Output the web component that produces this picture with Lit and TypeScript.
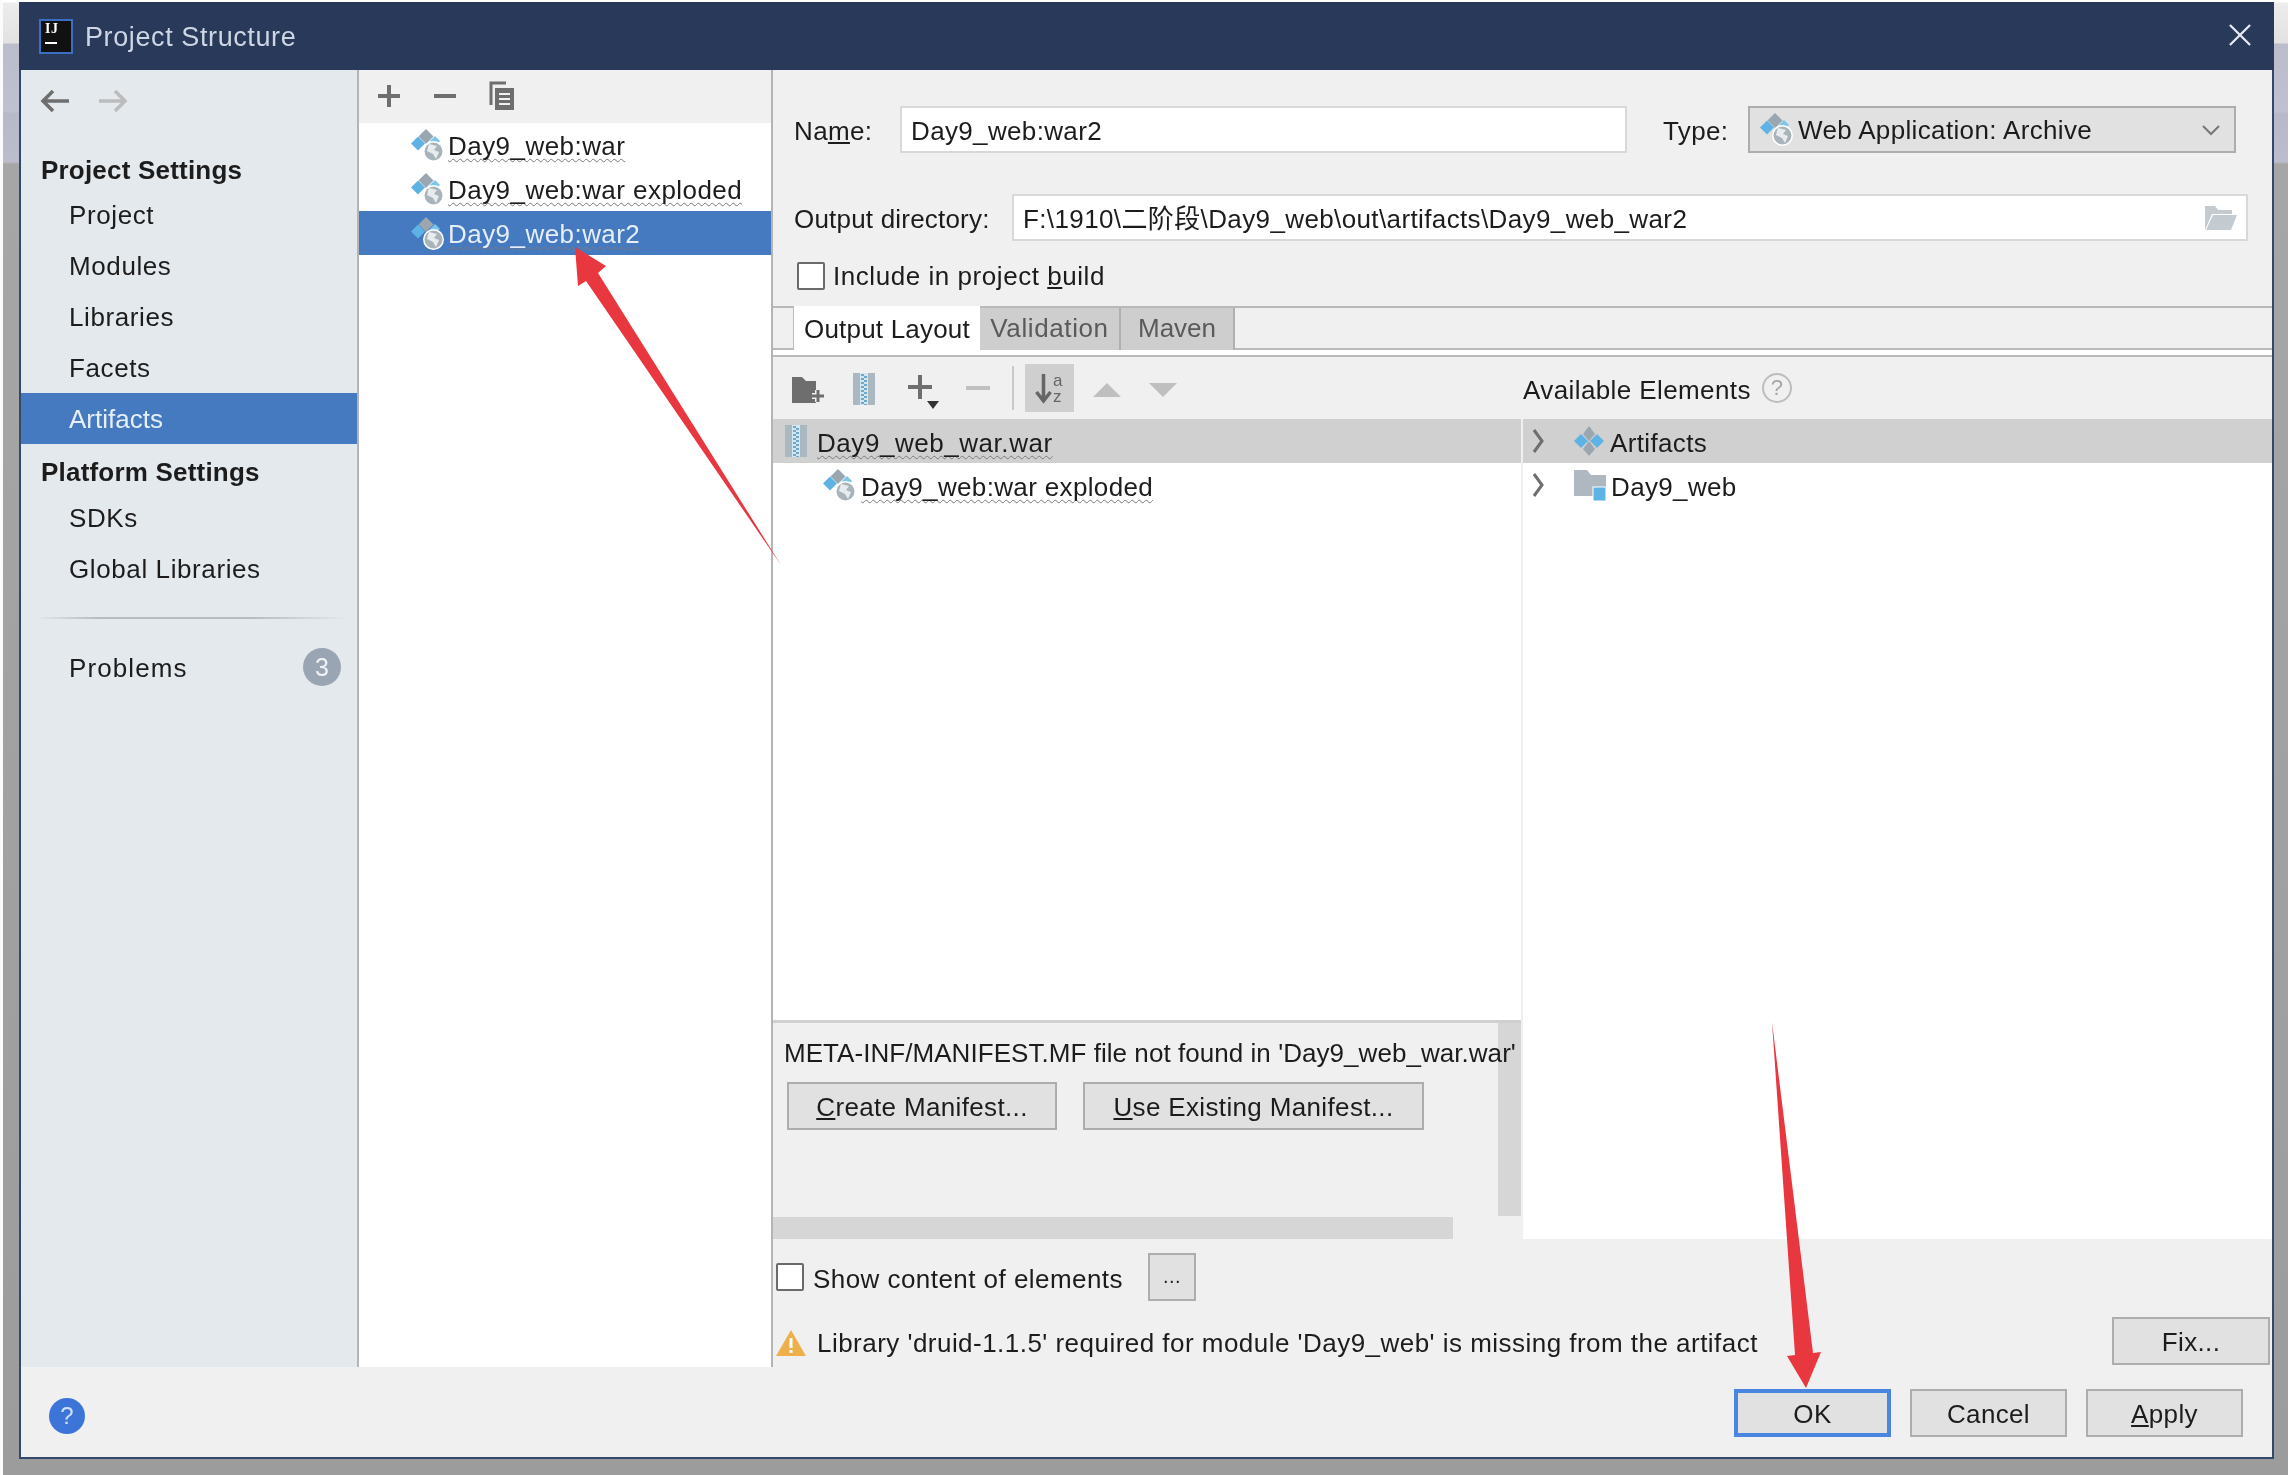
import { LitElement, html, css, svg } from "lit";
import { customElement } from "lit/decorators.js";

const artIcon = () => html`<svg class="ic33" viewBox="0 0 33 33">
  <path d="M15 0l7.5 7.5-7.5 7.5-7.5-7.5z" fill="#9aa7b0"/>
  <path d="M7 7.5l7 7-7 7-7-7z" fill="#5fb3e4"/>
  <path d="M24 7l5 5-3 3h-6l-1-3z" fill="#7cc6ec"/>
  <circle cx="22.5" cy="22.5" r="10.5" fill="#fff"/>
  <circle cx="22.5" cy="22.5" r="9" fill="#a9b3ba"/>
  <path d="M18 15l8 2-3 4 5 2-3 7-3-5-6-3 1-4z" fill="#e8ecef"/>
</svg>`;

const artsIcon = () => html`<svg class="ic30" viewBox="0 0 30 30">
  <path d="M15 0l6 8-6 7-6-7z" fill="#9aa7b0"/>
  <path d="M7 8l7 7-7 7-7-7z" fill="#5fb3e4"/>
  <path d="M23 8l7 7-7 7-7-7z" fill="#5fb3e4"/>
  <path d="M15 15l6 8-6 7-6-7z" fill="#9aa7b0"/>
</svg>`;

const warIcon = () => html`<svg class="war" viewBox="0 0 22 32">
  <rect width="22" height="32" fill="#aab8c2"/>
  <rect x="7" width="8" height="32" fill="#d4e6f1"/>
  ${[1, 5, 9, 13, 17, 21, 25, 29].map(
    (y) => svg`<rect x="8" y=${y} width="3" height="2" fill="#6fa8c9"/><rect x="11" y=${y + 2} width="3" height="2" fill="#6fa8c9"/>`
  )}
</svg>`;

const folderIcon = () => html`<svg class="folder" viewBox="0 0 32 31">
  <path d="M0 0h13l4 5h15v21H0z" fill="#afb8c0"/>
  <rect x="19" y="17" width="13" height="14" fill="#5fb3e4" stroke="#fff" stroke-width="1"/>
</svg>`;

const chev = () => html`<svg class="chev" viewBox="0 0 12 24"><path d="M2 1l8 11-8 11" fill="none" stroke="#6e6e6e" stroke-width="3"/></svg>`;

const wavy = (t: string) => html`<span class="wavy">${t}</span>`;

@customElement("app-root")
export class AppRoot extends LitElement {
  static styles = css`
    :host {
      display: block;
      width: 2288px;
      height: 1475px;
      overflow: hidden;
      position: relative;
      background: linear-gradient(#fff 0, #fff 2px, #ececec 3px, #e2e2e2 43px, #bcbdcc 44px, #c0c1d0 112px, #b8b9c8 113px, #bcbdcc 162px, #a6a6a6 164px, #9c9c9c 100%);
      border-left: 3px solid #fbfbfb;
      font-family: "Liberation Sans", "Noto Sans CJK SC", sans-serif;
      font-size: 26px;
      letter-spacing: 0.35px;
      color: #1c1c1c;
      box-sizing: border-box;
      padding: 2px 14px 16px 16px;
    }
    * { box-sizing: border-box; }
    .win {
      height: 100%;
      display: flex;
      flex-direction: column;
      background: #f0f0f0;
      border-left: 2px solid #34486b;
      border-right: 2px solid #34486b;
      border-bottom: 2px solid #34486b;
      filter: blur(0.6px);
    }
    .title {
      height: 68px;
      flex: none;
      margin: 0 -2px;
      background: #28395a;
      display: flex;
      align-items: center;
      padding: 0 23px 0 20px;
      color: #cdd6e2;
      font-size: 27px;
      letter-spacing: 0.6px;
    }
    .ij {
      width: 34px;
      height: 35px;
      background: #111;
      border: 2px solid #3b6fc4;
      color: #fff;
      font: bold 14px/16px "Liberation Serif", serif;
      padding: 0 0 0 4px;
      margin-right: 12px;
      display: flex;
      flex-direction: column;
    }
    .ij i { display: block; width: 12px; height: 2px; background: #fff; margin-top: 5px; }
    .title .t { flex: 1; padding-top: 2px; }
    .x { width: 22px; height: 22px; margin-bottom: 2px; }
    .main { flex: 1; display: flex; min-height: 0; }
    .side {
      width: 338px;
      flex: none;
      background: #e4e9ee;
      border-right: 2px solid #b4b4b4;
      display: flex;
      flex-direction: column;
      letter-spacing: 0.6px;
    }
    .nav { height: 75px; flex: none; display: flex; align-items: flex-start; gap: 28px; padding: 19px 0 0 19px; }
    .nav svg { width: 30px; height: 24px; }
    .hd { font-weight: bold; height: 44px; line-height: 51px; padding-left: 20px; letter-spacing: 0.2px; }
    .hd.p { height: 48px; padding-top: 6px; line-height: 45px; }
    .it { height: 51px; line-height: 53px; padding-left: 48px; }
    .it.sel { background: #4579c0; color: #e6eef8; height: 51px; letter-spacing: 0; }
    .sep { height: 2px; margin: 23px 10px 24px 14px; background: linear-gradient(90deg, #e4e9ee, #b8bcc0 20%, #b8bcc0 70%, #e4e9ee); }
    .prob { display: flex; align-items: center; justify-content: space-between; height: 48px; padding: 0 16px 0 48px; letter-spacing: 1.1px; }
    .prob .pt { padding-top: 2px; }
    .badge { width: 38px; height: 38px; border-radius: 50%; background: #9aa5b4; color: #f0f2f5; text-align: center; line-height: 38px; font-size: 25px; letter-spacing: 0; }
    .list { width: 414px; flex: none; background: #fff; border-right: 2px solid #b4b4b4; display: flex; flex-direction: column; letter-spacing: 0.45px; }
    .ltb { height: 53px; flex: none; background: #f0f0f0; display: flex; align-items: center; gap: 32px; padding: 0 0 1px 18px; }
    .tbi { width: 24px; height: 24px; }
    .copy { width: 26px; height: 30px; }
    .lr { height: 44px; display: flex; align-items: center; gap: 4px; padding-left: 52px; }
    .lr .wavy { padding-top: 3px; }
    .lr.sel { background: #4579c0; color: #e6eef8; }
    .wavy { text-decoration: underline wavy #7a7a7a 1px; text-underline-offset: 3px; text-decoration-skip-ink: none; }
    .ic33 { width: 33px; height: 33px; flex: none; }
    .ic30 { width: 30px; height: 30px; flex: none; }
    .war { width: 22px; height: 32px; flex: none; }
    .folder { width: 32px; height: 31px; flex: none; }
    .chev { width: 12px; height: 24px; flex: none; }
    .right { flex: 1; display: flex; flex-direction: column; min-width: 0; }
    .r1 { height: 83px; flex: none; display: flex; align-items: flex-end; padding: 0 0 0 21px; }
    .lbl1 { width: 106px; height: 47px; line-height: 47px; padding-top: 2px; }
    .field { height: 47px; background: #fff; border: 2px solid #d8d8d8; line-height: 47px; padding-left: 9px; }
    .f1 { width: 727px; }
    .lbl2 { width: 85px; height: 47px; margin-left: 36px; line-height: 47px; padding-top: 2px; }
    .combo { width: 488px; height: 47px; background: #e1e1e1; border: 2px solid #adadad; display: flex; align-items: center; gap: 5px; padding: 0 13px 0 10px; }
    .combo span { flex: 1; padding-top: 2px; }
    .combo .dn { width: 20px; height: 12px; }
    .r2 { height: 88px; flex: none; display: flex; align-items: flex-end; padding-left: 21px; }
    .lbl3 { width: 218px; height: 47px; line-height: 47px; padding-top: 2px; letter-spacing: 0.2px; }
    .f2 { width: 1236px; display: flex; align-items: center; justify-content: space-between; padding-right: 9px; letter-spacing: 0.38px; }
    .f2 span { padding-top: 3px; }
    .f2 svg { width: 33px; height: 24px; }
    .chk { width: 28px; height: 28px; flex: none; background: #fff; border: 2px solid #6a6a6a; border-radius: 2px; }
    .r3 { height: 65px; flex: none; display: flex; align-items: flex-start; gap: 8px; padding: 21px 0 0 24px; line-height: 28px; letter-spacing: 0.55px; }
    .tabs { height: 44px; flex: none; display: flex; padding-left: 20px; border-top: 2px solid #b9b9b9; border-bottom: 2px solid #b9b9b9; }
    .tab { height: 42px; line-height: 40px; text-align: center; background: #cecece; color: #5a5a5a; border-right: 2px solid #b0b0b0; }
    .tab.on { background: #fff; color: #1c1c1c; border: 0; width: 187px; margin-bottom: -2px; height: 44px; border-left: 1px solid #bbb; margin-top: -2px; line-height: 42px; padding-top: 2px; letter-spacing: 0.2px; }
    .tw1 { width: 141px; letter-spacing: 0.6px; }
    .tw2 { width: 114px; letter-spacing: 0; }
    .strip { height: 7px; flex: none; background: #fff; border-bottom: 2px solid #b9b9b9; }
    .otb { height: 62px; flex: none; display: flex; align-items: center; }
    .otbl { width: 750px; display: flex; align-items: center; padding-left: 19px; height: 100%; }
    .otbl svg { flex: none; }
    .nf { width: 33px; height: 26px; margin: 3px 28px 0 0; }
    .otbl .war { margin-top: 1px; }
    .plusw { width: 36px; height: 36px; margin: 10px 22px 0 33px; }
    .minusw { width: 24px; height: 4px; }
    .vs { width: 2px; height: 44px; background: #c9c9c9; margin: 0 11px 0 22px; }
    .sort { width: 49px; height: 48px; background: #cfcfcf; display: flex; align-items: center; justify-content: center; }
    .sort svg { width: 32px; height: 40px; }
    .sort text { font-family: "Liberation Sans", sans-serif; font-size: 17px; letter-spacing: 0; fill: #666; }
    .tri { width: 28px; height: 14px; margin-top: 3px; }
    .tri.u { margin-left: 19px; }
    .tri.d { margin-left: 28px; }
    .avail { flex: 1; display: flex; align-items: center; gap: 11px; letter-spacing: 0.4px; }
    .avail .at { padding-top: 5px; }
    .qm { width: 30px; height: 30px; border: 2px solid #bdbdbd; border-radius: 50%; color: #a5a5a5; text-align: center; line-height: 26px; font-size: 22px; letter-spacing: 0; }
    .split { flex: 1; display: flex; min-height: 0; }
    .ltree { width: 750px; flex: none; background: #fff; display: flex; flex-direction: column; border-right: 2px solid #f0f0f0; }
    .rtree { flex: 1; background: #fff; }
    .row0 { height: 44px; background: #d0d0d0; display: flex; align-items: center; gap: 10px; padding-left: 12px; letter-spacing: 0.55px; }
    .row1 { height: 44px; display: flex; align-items: center; gap: 5px; padding-left: 50px; }
    .row0 .wavy, .row1 .wavy, .rr0 span, .rr1 span { padding-top: 5px; }
    .rr0 { height: 44px; background: #d0d0d0; display: flex; align-items: center; padding-left: 9px; gap: 0; }
    .rr1 { height: 44px; display: flex; align-items: center; padding-left: 9px; }
    .rr0 .chev, .rr1 .chev { margin-right: 30px; }
    .rr0 .ic30 { margin-right: 6px; }
    .rr1 .folder { margin-right: 5px; }
    .spacer { flex: 1; }
    .mf { height: 219px; flex: none; background: #f0f0f0; border-top: 3px solid #d0d0d0; position: relative; padding: 13px 0 0 11px; overflow: hidden; white-space: nowrap; }
    .mf .msg { line-height: 35px; height: 33px; position: relative; z-index: 1; letter-spacing: 0.05px; }
    .mf .btns { display: flex; gap: 26px; margin: 13px 0 0 3px; }
    .btn { height: 48px; background: #e1e1e1; border: 2px solid #adadad; display: flex; align-items: center; justify-content: center; color: #1c1c1c; padding-top: 2px; }
    .bm1 { width: 270px; }
    .bm2 { width: 341px; }
    .vsb { position: absolute; right: 0; top: 0; width: 23px; height: 193px; background: #d6d6d6; }
    .hsb { position: absolute; left: 0; bottom: 0; width: 680px; height: 22px; background: #d6d6d6; }
    .lower { height: 128px; flex: none; display: flex; flex-direction: column; padding: 14px 0 0 3px; }
    .show { display: flex; align-items: center; gap: 9px; height: 48px; }
    .show .st { padding-top: 4px; letter-spacing: 0.45px; }
    .dots { width: 48px; height: 48px; margin-left: 16px; padding-bottom: 4px; font-size: 20px; }
    .warn { display: flex; align-items: center; margin-top: 16px; height: 48px; }
    .warn svg { width: 30px; height: 26px; margin-right: 11px; margin-top: 4px; }
    .warn .wt { flex: 1; padding-top: 4px; letter-spacing: 0.47px; }
    .fix { width: 158px; margin-right: 2px; }
    .foot { height: 90px; flex: none; display: flex; align-items: flex-start; padding: 22px 29px 0 0; gap: 19px; }
    .help { width: 36px; height: 36px; margin: 9px auto 0 28px; border-radius: 50%; background: #3c74d8; color: #cfe0fa; text-align: center; line-height: 36px; font-size: 24px; }
    .b3 { width: 157px; }
    .ok { border: 4px solid #4a86df; }
    .arrows { position: absolute; left: -3px; top: 0; width: 2288px; height: 1475px; pointer-events: none; filter: blur(0.5px); }
  `;

  render() {
    const plusMinus = html`
      <svg class="tbi" viewBox="0 0 24 24"><path d="M12 1v22M1 12h22" stroke="#6e6e6e" stroke-width="4"/></svg>
      <svg class="tbi" viewBox="0 0 24 24"><path d="M1 12h22" stroke="#6e6e6e" stroke-width="4"/></svg>
      <svg class="copy" viewBox="0 0 26 30">
        <path d="M2 24V2h15" fill="none" stroke="#6e6e6e" stroke-width="3"/>
        <rect x="6" y="7" width="19" height="22" fill="#6e6e6e"/>
        <path d="M10 13h11M10 18h11M10 23h11" stroke="#f0f0f0" stroke-width="2"/>
      </svg>`;
    return html`
      <div class="win">
        <div class="title">
          <div class="ij">IJ<i></i></div>
          <div class="t">Project Structure</div>
          <svg class="x" viewBox="0 0 24 24"><path d="M1 1l22 22M23 1L1 23" stroke="#e8ecf2" stroke-width="2.4"/></svg>
        </div>
        <div class="main">
          <div class="side">
            <div class="nav">
              <svg viewBox="0 0 30 24"><path d="M29 12H4M13 2L3 12l10 10" fill="none" stroke="#6e6e6e" stroke-width="3.5"/></svg>
              <svg viewBox="0 0 30 24"><path d="M1 12h25M17 2l10 10-10 10" fill="none" stroke="#bcbcbc" stroke-width="3.5"/></svg>
            </div>
            <div class="hd">Project Settings</div>
            <div class="it">Project</div>
            <div class="it">Modules</div>
            <div class="it">Libraries</div>
            <div class="it">Facets</div>
            <div class="it sel">Artifacts</div>
            <div class="hd p">Platform Settings</div>
            <div class="it">SDKs</div>
            <div class="it">Global Libraries</div>
            <div class="sep"></div>
            <div class="prob"><span class="pt">Problems</span><span class="badge">3</span></div>
          </div>
          <div class="list">
            <div class="ltb">${plusMinus}</div>
            <div class="lr">${artIcon()}${wavy("Day9_web:war")}</div>
            <div class="lr">${artIcon()}${wavy("Day9_web:war exploded")}</div>
            <div class="lr sel">${artIcon()}${wavy("Day9_web:war2")}</div>
          </div>
          <div class="right">
            <div class="r1">
              <div class="lbl1">Na<u>m</u>e:</div>
              <div class="field f1">Day9_web:war2</div>
              <div class="lbl2">Type:</div>
              <div class="combo">${artIcon()}<span>Web Application: Archive</span>
                <svg class="dn" viewBox="0 0 20 12"><path d="M2 2l8 8 8-8" fill="none" stroke="#777" stroke-width="2"/></svg>
              </div>
            </div>
            <div class="r2">
              <div class="lbl3">Output directory:</div>
              <div class="field f2"><span>F:\\1910\\二阶段\\Day9_web\\out\\artifacts\\Day9_web_war2</span>
                <svg viewBox="0 0 33 24"><path d="M1 24V0h10l3 4h14v4H8z" fill="#c3cbd0"/><path d="M9 9h24l-6 15H2z" fill="#c3cbd0"/></svg>
              </div>
            </div>
            <div class="r3"><span class="chk"></span><span>Include in project <u>b</u>uild</span></div>
            <div class="tabs">
              <div class="tab on">Output Layout</div>
              <div class="tab tw1">Validation</div>
              <div class="tab tw2">Maven</div>
            </div>
            <div class="strip"></div>
            <div class="otb">
              <div class="otbl">
                <svg class="nf" viewBox="0 0 33 26">
                  <path d="M0 0h10l4 4h10v22H0z" fill="#6e6e6e"/>
                  <path d="M26 13v12M20 19h12" stroke="#f0f0f0" stroke-width="6"/>
                  <path d="M26 13v12M20 19h12" stroke="#6e6e6e" stroke-width="3"/>
                </svg>
                ${warIcon()}
                <svg class="plusw" viewBox="0 0 36 36"><path d="M12 0v24M0 12h24" stroke="#6e6e6e" stroke-width="4"/><path d="M19 26h12l-6 8z" fill="#333"/></svg>
                <svg class="minusw" viewBox="0 0 24 4"><rect width="24" height="4" fill="#c0c0c0"/></svg>
                <div class="vs"></div>
                <div class="sort">
                  <svg viewBox="0 0 32 40">
                    <path d="M9.5 6v26M2.5 24l7 9 7-9" fill="none" stroke="#666" stroke-width="3.5"/>
                    <text x="19" y="18">a</text>
                    <text x="19" y="34">z</text>
                  </svg>
                </div>
                <svg class="tri u" viewBox="0 0 28 14"><path d="M14 0l14 14H0z" fill="#bfbfbf"/></svg>
                <svg class="tri d" viewBox="0 0 28 14"><path d="M0 0h28L14 14z" fill="#bfbfbf"/></svg>
              </div>
              <div class="avail"><span class="at">Available Elements</span><span class="qm">?</span></div>
            </div>
            <div class="split">
              <div class="ltree">
                <div class="row0">${warIcon()}${wavy("Day9_web_war.war")}</div>
                <div class="row1">${artIcon()}${wavy("Day9_web:war exploded")}</div>
                <div class="spacer"></div>
                <div class="mf">
                  <div class="msg">META-INF/MANIFEST.MF file not found in 'Day9_web_war.war'</div>
                  <div class="btns">
                    <div class="btn bm1"><span><u>C</u>reate Manifest...</span></div>
                    <div class="btn bm2"><span><u>U</u>se Existing Manifest...</span></div>
                  </div>
                  <div class="vsb"></div>
                  <div class="hsb"></div>
                </div>
              </div>
              <div class="rtree">
                <div class="rr0">${chev()}${artsIcon()}<span>Artifacts</span></div>
                <div class="rr1">${chev()}${folderIcon()}<span>Day9_web</span></div>
              </div>
            </div>
            <div class="lower">
              <div class="show"><span class="chk"></span><span class="st">Show content of elements</span><div class="btn dots">...</div></div>
              <div class="warn">
                <svg viewBox="0 0 30 26"><path d="M15 0l15 26H0z" fill="#edb04a"/><path d="M15 8v10M15 20v3" stroke="#fff" stroke-width="3"/></svg>
                <span class="wt">Library 'druid-1.1.5' required for module 'Day9_web' is missing from the artifact</span>
                <div class="btn fix">Fix...</div>
              </div>
            </div>
          </div>
        </div>
        <div class="foot">
          <div class="help">?</div>
          <div class="btn b3 ok">OK</div>
          <div class="btn b3">Cancel</div>
          <div class="btn b3"><span><u>A</u>pply</span></div>
        </div>
      </div>
      <svg class="arrows" viewBox="0 0 2288 1475">
        <path d="M575 247L606 266L598 273L781 565L586 281L578 286Z" fill="#e8373f"/>
        <path d="M1772 1022L1813 1353L1821 1352L1806 1388L1787 1356L1795 1355Z" fill="#e8373f"/>
      </svg>
    `;
  }
}
